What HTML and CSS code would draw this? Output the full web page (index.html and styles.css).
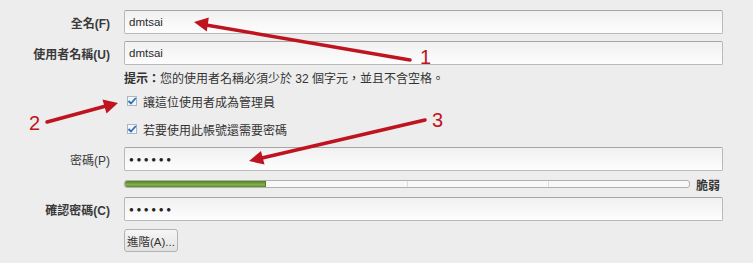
FILE: index.html
```html
<!DOCTYPE html>
<html lang="zh-Hant">
<head>
<meta charset="utf-8">
<link rel="stylesheet" href="styles.css">
</head>
<body>
<div class="form">
  <div class="row r1">
    <div class="label bold">全名(F)</div>
    <div class="input">dmtsai</div>
  </div>
  <div class="row r2">
    <div class="label bold">使用者名稱(U)</div>
    <div class="input">dmtsai</div>
  </div>
  <div class="row hint">
    <div class="label"></div>
    <div class="text"><b>提示：</b>您的使用者名稱必須少於 32 個字元，並且不含空格。</div>
  </div>
  <div class="row cb1">
    <div class="label"></div>
    <div class="check"><span class="box"><svg width="10" height="10" viewBox="0 0 10 10"><path d="M1.5 5 L4 7.5 L8.8 2" fill="none" stroke="#2f6fb5" stroke-width="1.8"/></svg></span>讓這位使用者成為管理員</div>
  </div>
  <div class="row cb2">
    <div class="label"></div>
    <div class="check"><span class="box"><svg width="10" height="10" viewBox="0 0 10 10"><path d="M1.5 5 L4 7.5 L8.8 2" fill="none" stroke="#2f6fb5" stroke-width="1.8"/></svg></span>若要使用此帳號還需要密碼</div>
  </div>
  <div class="row pw">
    <div class="label">密碼(P)</div>
    <div class="input dots">●●●●●●</div>
  </div>
  <div class="row strength">
    <div class="label"></div>
    <div class="bar"><span class="seg fill"></span><span class="seg"></span><span class="seg"></span><span class="seg"></span></div>
    <div class="weak">脆弱</div>
  </div>
  <div class="row confirm">
    <div class="label bold">確認密碼(C)</div>
    <div class="input dots">●●●●●●</div>
  </div>
  <div class="row adv">
    <div class="label"></div>
    <div class="button">進階(A)...</div>
  </div>
</div>
<svg class="notes" width="753" height="263" viewBox="0 0 753 263">
  <g stroke="#bf1420" stroke-width="3.5" stroke-linecap="round" fill="none">
    <line x1="410" y1="60" x2="206" y2="25"/>
    <line x1="47" y1="122" x2="106" y2="106"/>
    <line x1="425" y1="120" x2="262" y2="158"/>
  </g>
  <g fill="#bf1420">
    <polygon points="194,22 208.8,17.5 206.8,31.5"/>
    <polygon points="118,103 106.5,113.5 102.5,99.5"/>
    <polygon points="249,161 264.5,164.5 261,151"/>
    <text x="420" y="64" class="num">1</text>
    <text x="29" y="130" class="num">2</text>
    <text x="432" y="127" class="num">3</text>
  </g>
</svg>
</body>
</html>
```
FILE: styles.css
```css
html, body {
  margin: 0;
  padding: 0;
  background: #ededed;
}
body {
  width: 753px;
  height: 263px;
  position: relative;
  overflow: hidden;
  font-family: "Liberation Sans", "Noto Sans CJK TC", sans-serif;
  font-size: 12px;
  color: #333;
}
.form {
  display: flex;
  flex-direction: column;
  padding: 10px 0 0 8px;
}
.row {
  display: flex;
  align-items: center;
}
.label {
  width: 102px;
  flex: none;
  margin-right: 14px;
  text-align: right;
  color: #3a3a3a;
}
.bold { font-weight: bold; }
.input {
  box-sizing: border-box;
  width: 599px;
  height: 24px;
  border: 1px solid #b9b9b9;
  border-top-color: #a6a6a6;
  border-radius: 2px;
  background: linear-gradient(#f1f1f1, #fdfdfd);
  padding: 0 4px;
  display: flex;
  align-items: center;
  font-size: 11.5px;
  color: #2a2a2a;
}
.r1 { height: 24px; }
.r2 { height: 24px; margin-top: 7px; }
.hint { height: 24px; }
.hint b { font-weight: bold; }
.text { color: #333; }
.cb1 { height: 24px; }
.cb2 { height: 32px; }
.check {
  display: flex;
  align-items: center;
  padding-left: 3px;
}
.box {
  width: 10px;
  height: 10px;
  box-sizing: border-box;
  border: 1px solid #a9b7c4;
  background: #f3f6fa;
  margin-right: 6px;
  display: flex;
  align-items: center;
  justify-content: center;
}
.box svg { display: block; flex: none; }
.pw { height: 24px; margin-top: 2px; }
.dots {
  font-size: 8px;
  letter-spacing: 2.6px;
  color: #222;
}
.strength { height: 20px; margin-top: 3px; }
.bar {
  box-sizing: border-box;
  width: 566px;
  height: 8px;
  border: 1px solid #b0b0b0;
  border-radius: 3px;
  background: #f8f8f8;
  display: flex;
  overflow: hidden;
}
.seg {
  flex: 1;
  border-right: 1px solid #dcdcdc;
}
.seg:last-child { border-right: none; }
.seg.fill {
  background: linear-gradient(#4f7f20, #84b04e 60%, #5d8d2c);
  border-right-color: #4f7f20;
}
.weak {
  margin-left: 6px;
  font-weight: bold;
  color: #3a3a3a;
}
.confirm { height: 24px; margin-top: 3px; }
.adv { height: 23px; margin-top: 8px; }
.button {
  box-sizing: border-box;
  width: 54px;
  height: 23px;
  border: 1px solid #b3b3b3;
  border-radius: 3px;
  background: linear-gradient(#f6f6f6, #e2e2e2);
  display: flex;
  align-items: center;
  justify-content: center;
  color: #333;
  font-size: 11.5px;
}
.notes {
  position: absolute;
  top: 0;
  left: 0;
  pointer-events: none;
}
.num {
  font-family: "Liberation Sans", sans-serif;
  font-size: 20px;
}
```
